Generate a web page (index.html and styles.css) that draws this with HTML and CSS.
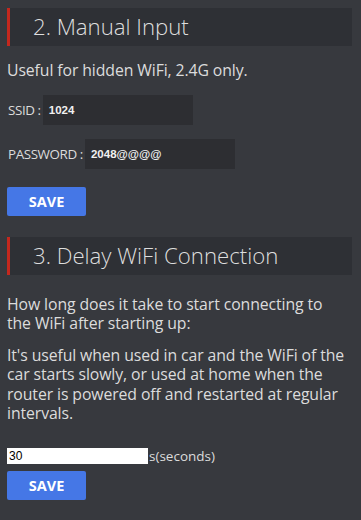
FILE: index.html
```html
<!DOCTYPE html>
<html>
<head>
<meta charset="utf-8">
<link rel="stylesheet" href="styles.css">
</head>
<body>
<section class="sec">
  <h2 class="head">2. Manual Input</h2>
  <p class="txt">Useful for hidden WiFi, 2.4G only.</p>
  <div class="field"><span class="lbl">SSID :</span><span class="dark-input">1024</span></div>
  <div class="field"><span class="lbl">PASSWORD :</span><span class="dark-input">2048@@@@</span></div>
  <button class="save">SAVE</button>
</section>
<section class="sec">
  <h2 class="head">3. Delay WiFi Connection</h2>
  <p class="txt">How long does it take to start connecting to the WiFi after starting up:</p>
  <p class="txt">It's useful when used in car and the WiFi of the car starts slowly, or used at home when the router is powered off and restarted at regular intervals.</p>
  <div class="delay"><span class="white-input">30</span><span class="unit">s(seconds)</span></div>
  <button class="save save2">SAVE</button>
</section>
</body>
</html>
```
FILE: styles.css
```css
html, body {
  margin: 0;
  padding: 0;
  background: #37393e;
}
body {
  padding: 8px 7px 0 7px;
  font-family: "Open Sans", "Noto Sans", sans-serif;
  color: #dcdcdc;
  height: 512px;
  overflow: hidden;
}
.sec {
  display: flex;
  flex-direction: column;
  align-items: flex-start;
}
.head {
  align-self: stretch;
  margin: 0 2px 0 0;
  height: 38px;
  box-sizing: border-box;
  border-left: 3px solid #c4281e;
  background: #2e3035;
  font-weight: 300;
  font-size: 22.2px;
  line-height: 38px;
  padding-left: 23px;
  color: #dedede;
}
.txt {
  margin: 0;
  font-size: 15.8px;
  line-height: 19.5px;
  letter-spacing: -0.1px;
  padding-right: 6px;
}
.sec:first-child .txt {
  margin-top: 15px;
}
.field {
  display: flex;
  align-items: center;
  margin-top: 14px;
  font-size: 13.4px;
}
.field + .field {
  margin-top: 14px;
}
.lbl {
  padding-left: 1px;
  letter-spacing: -0.4px;
}
.dark-input {
  margin-left: 2px;
  width: 150px;
  height: 30px;
  box-sizing: border-box;
  background: #2d2e32;
  font-family: "Liberation Sans", Arial, sans-serif;
  font-size: 11.5px;
  font-weight: bold;
  color: #f0f0f0;
  line-height: 30px;
  padding-left: 6px;
}
.save {
  margin-top: 18px;
  width: 79px;
  height: 29px;
  border: 0;
  border-radius: 2px;
  background: #4577e6;
  color: #fff;
  font-family: "Open Sans", "Noto Sans", sans-serif;
  font-weight: 700;
  font-size: 14.5px;
  padding: 0;
  margin-bottom: 21px;
}
.sec:last-child .txt:first-of-type {
  margin-top: 20px;
}
.sec:last-child .txt + .txt {
  margin-top: 12px;
}
.delay {
  display: flex;
  align-items: center;
  margin-top: 23px;
}
.white-input {
  width: 141px;
  height: 16px;
  box-sizing: border-box;
  background: #fff;
  color: #000;
  font-family: "Liberation Sans", Arial, sans-serif;
  font-size: 12px;
  line-height: 16px;
  padding-left: 2px;
}
.unit {
  font-size: 13.5px;
  margin-left: 1px;
}
.save2 {
  margin-top: 6px;
}
```
